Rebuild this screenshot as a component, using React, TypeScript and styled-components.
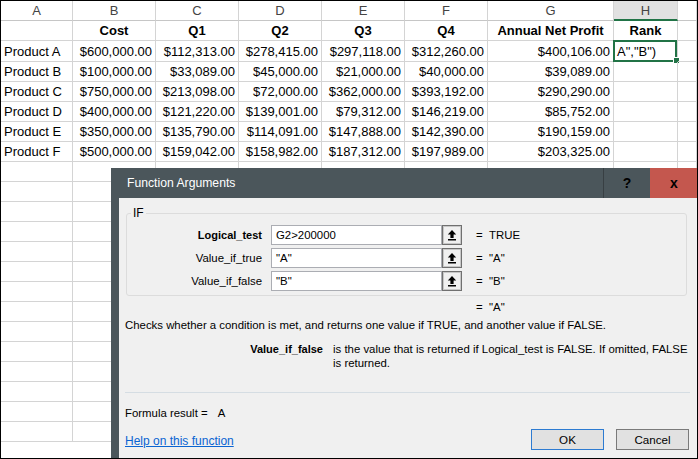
import styled, { createGlobalStyle } from "styled-components";

const GlobalStyle = createGlobalStyle`
  body {
    margin: 0;
    background: #fff;
  }
`;

const LETTERS = ["A", "B", "C", "D", "E", "F", "G", "H", ""];
const HEADERS = ["", "Cost", "Q1", "Q2", "Q3", "Q4", "Annual Net Profit", "Rank", ""];

const ROWS = [
  ["Product A", "$600,000.00", "$112,313.00", "$278,415.00", "$297,118.00", "$312,260.00", "$400,106.00"],
  ["Product B", "$100,000.00", "$33,089.00", "$45,000.00", "$21,000.00", "$40,000.00", "$39,089.00"],
  ["Product C", "$750,000.00", "$213,098.00", "$72,000.00", "$362,000.00", "$393,192.00", "$290,290.00"],
  ["Product D", "$400,000.00", "$121,220.00", "$139,001.00", "$79,312.00", "$146,219.00", "$85,752.00"],
  ["Product E", "$350,000.00", "$135,790.00", "$114,091.00", "$147,888.00", "$142,390.00", "$190,159.00"],
  ["Product F", "$500,000.00", "$159,042.00", "$158,982.00", "$187,312.00", "$197,989.00", "$203,325.00"],
];

const ARGS = [
  { label: "Logical_test", value: "G2>200000", result: "TRUE", bold: true },
  { label: "Value_if_true", value: '"A"', result: '"A"', bold: false },
  { label: "Value_if_false", value: '"B"', result: '"B"', bold: false },
];

function UploadIcon() {
  return (
    <svg width="12" height="12" viewBox="0 0 12 12">
      <path d="M6 1 L1.8 5.4 H4.4 V9 H7.6 V5.4 H10.2 Z" fill="#000" />
      <rect x="2" y="10" width="8" height="1.5" fill="#000" />
    </svg>
  );
}

export default function App() {
  return (
    <>
      <GlobalStyle />
      <Frame>
        <Sheet>
          {LETTERS.map((l, i) => (
            <ColHead key={"h" + i} $active={l === "H"}>
              {l}
            </ColHead>
          ))}
          {HEADERS.map((h, i) => (
            <Cell key={"t" + i} $align="center" $bold>
              {h}
            </Cell>
          ))}
          {ROWS.map((row, r) => (
            <>
              {row.map((v, c) => (
                <Cell key={r + "-" + c} $align={c === 0 ? "left" : "right"}>
                  {v}
                </Cell>
              ))}
              {r === 0 ? (
                <Cell $align="left" $selected>
                  A","B")
                </Cell>
              ) : (
                <Cell />
              )}
              <Cell />
            </>
          ))}
          {Array.from({ length: 14 * 9 }).map((_, i) => (
            <Cell key={"e" + i} />
          ))}
        </Sheet>

        <Dialog>
          <TitleBar>
            <Title>Function Arguments</Title>
            <TitleButton>?</TitleButton>
            <TitleButton $close>x</TitleButton>
          </TitleBar>
          <Body>
            <Group>
              <Legend>IF</Legend>
              <ArgGrid>
                {ARGS.map((a) => (
                  <>
                    <ArgLabel key={a.label} $bold={a.bold}>
                      {a.label}
                    </ArgLabel>
                    <ArgInput>{a.value}</ArgInput>
                    <RefButton>
                      <UploadIcon />
                    </RefButton>
                    <Eq>=</Eq>
                    <ArgResult>{a.result}</ArgResult>
                  </>
                ))}
              </ArgGrid>
            </Group>
            <TotalRow>
              <Eq>=</Eq>
              <ArgResult>"A"</ArgResult>
            </TotalRow>
            <Description>
              Checks whether a condition is met, and returns one value if TRUE, and another value if FALSE.
            </Description>
            <HelpBlock>
              <HelpLabel>Value_if_false</HelpLabel>
              <HelpText>
                <span>is the value that is returned if Logical_test is FALSE. If omitted, FALSE</span>
                <span>is returned.</span>
              </HelpText>
            </HelpBlock>
            <Separator />
            <ResultLine>
              Formula result = <ResultValue>A</ResultValue>
            </ResultLine>
            <Footer>
              <HelpLink>Help on this function</HelpLink>
              <Buttons>
                <Button $default>OK</Button>
                <Button>Cancel</Button>
              </Buttons>
            </Footer>
          </Body>
        </Dialog>
      </Frame>
    </>
  );
}

const Frame = styled.div`
  position: relative;
  width: 698px;
  height: 459px;
  box-sizing: border-box;
  border: 1px solid #000;
  overflow: hidden;
  background: #fff;
`;

const Sheet = styled.div`
  display: grid;
  grid-template-columns: 72px 83px 83px 83px 83px 83px 126px 64px 1fr;
  grid-template-rows: 20px 20px 21px;
  grid-auto-rows: 20px;
  font-family: "Liberation Sans", Arial, sans-serif;
  font-size: 13px;
  color: #000;
`;

const ColHead = styled.div<{ $active?: boolean }>`
  display: flex;
  align-items: center;
  justify-content: center;
  box-sizing: border-box;
  color: #444;
  background: ${({ $active }) => ($active ? "#e1e1e1" : "#fff")};
  border-right: 1px solid #d4d4d4;
  border-bottom: ${({ $active }) => ($active ? "2px solid #217346" : "1px solid #c6c6c6")};
`;

const Cell = styled.div<{ $align?: string; $bold?: boolean; $selected?: boolean }>`
  position: relative;
  display: flex;
  align-items: center;
  justify-content: ${({ $align }) =>
    $align === "right" ? "flex-end" : $align === "center" ? "center" : "flex-start"};
  box-sizing: border-box;
  padding: 0 3px;
  white-space: nowrap;
  overflow: visible;
  font-weight: ${({ $bold }) => ($bold ? 700 : 400)};
  border-right: 1px solid #d4d4d4;
  border-bottom: 1px solid #d4d4d4;

  ${({ $selected }) =>
    $selected &&
    `
    &::before {
      content: "";
      position: absolute;
      inset: -1px 0 -1px -1px;
      border: 2px solid #217346;
    }
    &::after {
      content: "";
      position: absolute;
      right: -3px;
      bottom: -3px;
      width: 5px;
      height: 5px;
      background: #217346;
      border: 1px solid #fff;
    }
  `}
`;

const Dialog = styled.div`
  position: absolute;
  left: 110px;
  top: 167px;
  width: 586px;
  height: 300px;
  display: flex;
  flex-direction: column;
  background: #4b565b;
  font-family: "Liberation Sans", Arial, sans-serif;
  font-size: 11.4px;
  color: #000;
`;

const TitleBar = styled.div`
  display: flex;
  align-items: stretch;
  height: 30px;
  flex-shrink: 0;
`;

const Title = styled.div`
  flex: 1;
  display: flex;
  align-items: center;
  padding-left: 16px;
  color: #fff;
  font-size: 12.2px;
`;

const TitleButton = styled.div<{ $close?: boolean }>`
  width: 47px;
  display: flex;
  align-items: center;
  justify-content: center;
  font-weight: 700;
  font-size: 14px;
  color: #000;
  box-sizing: border-box;
  background: ${({ $close }) => ($close ? "#c4574e" : "#4b565b")};
  border-left: 1px solid ${({ $close }) => ($close ? "#c4574e" : "#383f43")};
`;

const Body = styled.div`
  flex: 1;
  margin-left: 8px;
  background: #f0f0f0;
  padding: 8px 10px 0 6px;
`;

const Group = styled.fieldset`
  margin: 0 0 0 1px;
  padding: 5px 0 4px 0;
  border: 1px solid #dcdcdc;
  border-radius: 3px;
`;

const Legend = styled.legend`
  margin-left: 4px;
  padding: 0 2px;
  font-size: 12px;
`;

const ArgGrid = styled.div`
  display: grid;
  grid-template-columns: 144px 171px 20px 27px 1fr;
  grid-auto-rows: 20px;
  row-gap: 3px;
`;

const ArgLabel = styled.div<{ $bold?: boolean }>`
  display: flex;
  align-items: center;
  justify-content: flex-end;
  padding-right: 9px;
  font-size: ${({ $bold }) => ($bold ? "11px" : "11.4px")};
  font-weight: ${({ $bold }) => ($bold ? 700 : 400)};
`;

const ArgInput = styled.div`
  display: flex;
  align-items: center;
  box-sizing: border-box;
  padding-left: 4px;
  background: #fff;
  border: 1px solid #abadb3;
`;

const RefButton = styled.div`
  display: flex;
  align-items: center;
  justify-content: center;
  box-sizing: border-box;
  background: #f0f0f0;
  border: 1px solid #707070;
  box-shadow: inset 0 0 0 1px #c8c8c8;
`;

const Eq = styled.div`
  display: flex;
  align-items: center;
  padding-left: 14px;
  width: 27px;
  box-sizing: border-box;
`;

const ArgResult = styled.div`
  display: flex;
  align-items: center;
`;

const TotalRow = styled.div`
  display: flex;
  height: 14px;
  margin-top: 4px;
  padding-left: 337px;
`;

const Description = styled.div`
  margin-top: 4px;
  line-height: 14px;
`;

const HelpBlock = styled.div`
  display: grid;
  grid-template-columns: 208px 1fr;
  margin-top: 10px;
  line-height: 14px;
`;

const HelpLabel = styled.div`
  text-align: right;
  padding-right: 10px;
  font-size: 11px;
  font-weight: 700;
`;

const HelpText = styled.div`
  display: flex;
  flex-direction: column;
  white-space: nowrap;
`;

const Separator = styled.div`
  height: 1px;
  margin: 22px -3px 0 0;
  background: #d5dde3;
`;

const ResultLine = styled.div`
  margin-top: 13px;
  line-height: 14px;
`;

const ResultValue = styled.span`
  margin-left: 7px;
`;

const Footer = styled.div`
  display: flex;
  align-items: center;
  justify-content: space-between;
  margin-top: 9px;
  height: 21px;
`;

const HelpLink = styled.a`
  color: #0a64d2;
  font-size: 12px;
  text-decoration: underline;
  margin-top: 3px;
`;

const Buttons = styled.div`
  display: flex;
  gap: 12px;
  margin-right: -2px;
`;

const Button = styled.button<{ $default?: boolean }>`
  width: 73px;
  height: 21px;
  padding: 0;
  font-family: "Liberation Sans", Arial, sans-serif;
  font-size: 11.6px;
  color: #000;
  background: #e1e1e1;
  border: 1px solid ${({ $default }) => ($default ? "#2d7bd1" : "#7a7a7a")};
`;
